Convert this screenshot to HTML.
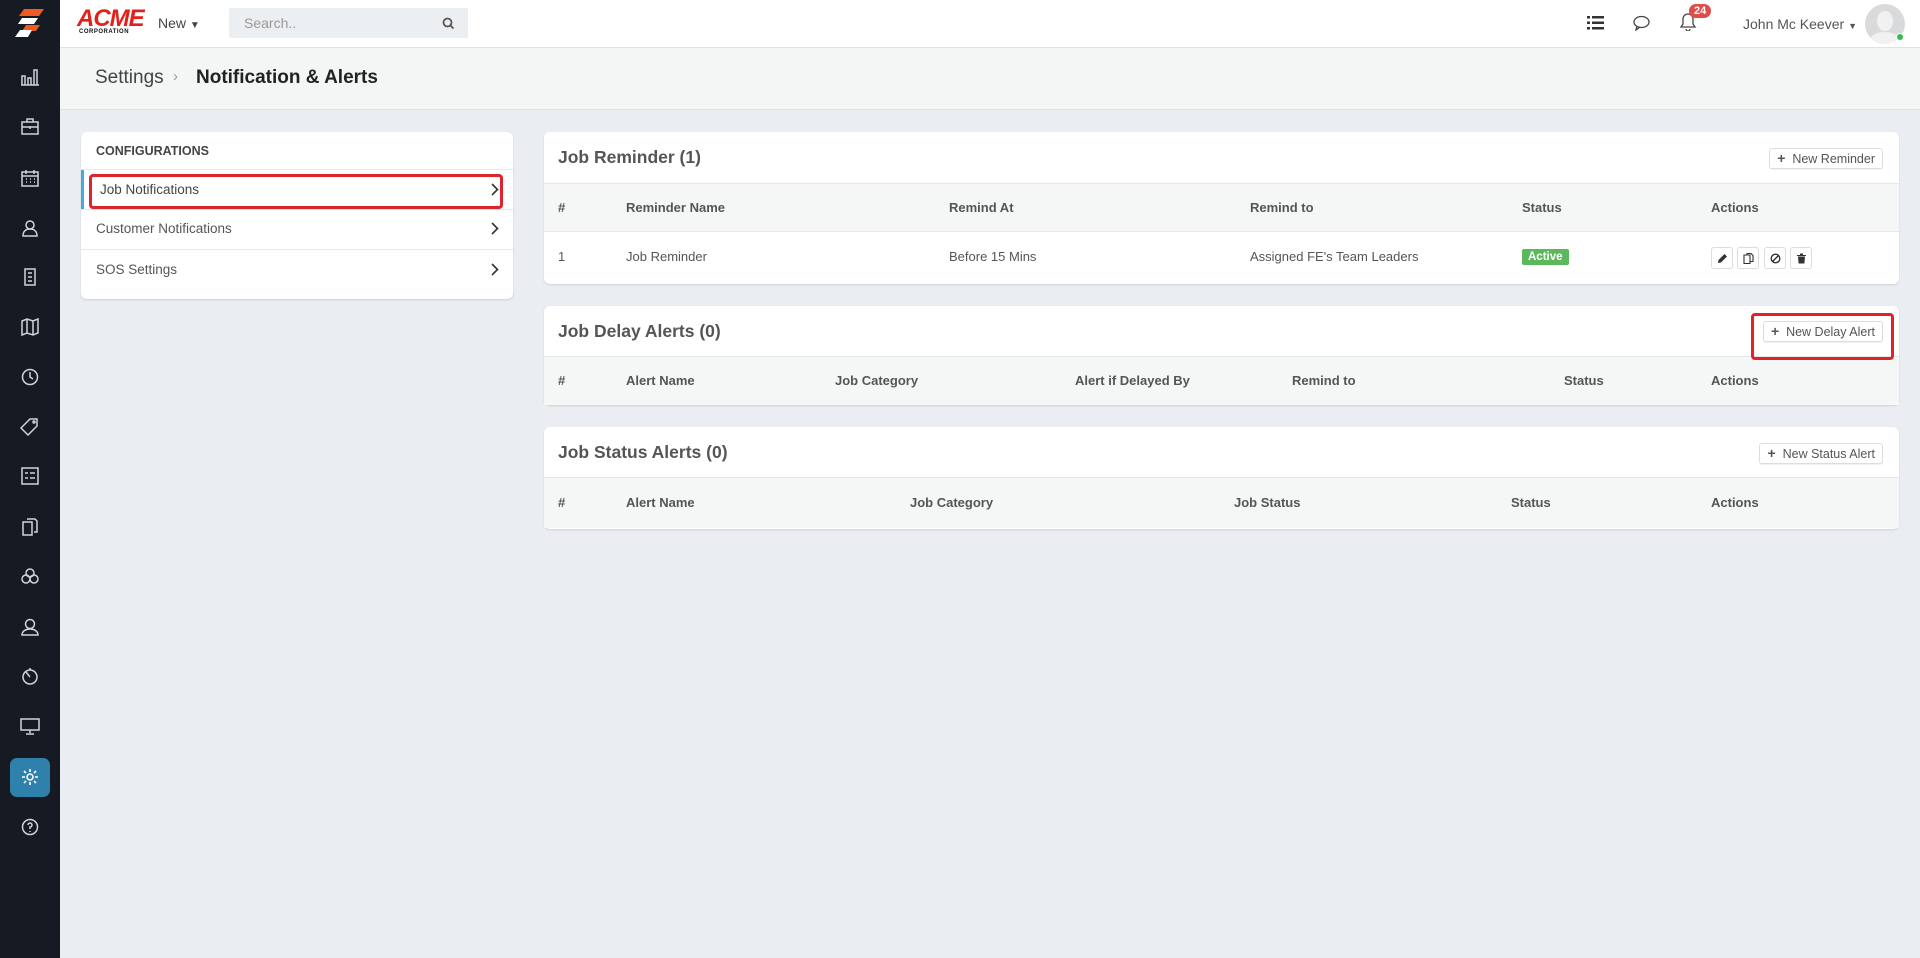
<!DOCTYPE html>
<html><head><style>
*{box-sizing:border-box;margin:0;padding:0}
body{width:1920px;height:958px;overflow:hidden;background:#eaedf1;font-family:"Liberation Sans",sans-serif;color:#555;position:relative}
.side{position:absolute;left:0;top:0;width:60px;height:958px;background:#161a23}
.side svg{position:absolute;left:20px}
.top{position:absolute;left:60px;top:0;right:0;height:48px;background:#fff;border-bottom:1px solid #e0e3e6}
.crumb{position:absolute;left:60px;top:48px;right:0;height:62px;background:#f4f5f5;border-bottom:1px solid #dfe2e5}
.card{position:absolute;background:#fff;border-radius:6px;box-shadow:0 1px 2px rgba(0,0,0,.12)}
.abs{position:absolute}
.th{position:absolute;font-size:13px;font-weight:bold;color:#555}
.td{position:absolute;font-size:13px;color:#555}
.hd{position:absolute;left:14px;font-size:17.5px;font-weight:bold;color:#555}
.btn{position:absolute;border:1px solid #ddd;border-radius:3px;font-size:12.5px;color:#555;height:21px;line-height:19px;padding:0 7px;background:#fff;box-shadow:0 1px 1px rgba(0,0,0,.06)}
.thead{position:absolute;left:0;right:0;background:#f5f6f6;border-top:1px solid #e5e7e9;border-bottom:1px solid #e5e7e9}
.ib{position:absolute;top:247px;width:22px;height:22px;border:1px solid #ddd;border-radius:3px;background:#fff}
.ib svg{position:absolute;left:5px;top:5px}
.red{position:absolute;border:3px solid #e0232a;border-radius:4px}
.chev{position:absolute;right:14px}
</style></head><body>
<div class="side">
<svg style="left:14px;top:8px" width="32" height="30" viewBox="0 0 32 30"><path d="M10 1h20l-5 7H5z" fill="#f05a22"/><path d="M8 10h16l-4 6H4z" fill="#fff"/><path d="M12 17h14l-4 6H8z" fill="#f05a22"/><path d="M6 22h12l-4 7H1z" fill="#fff"/></svg>
<svg style="top:68px" width="20" height="18" viewBox="0 0 20 18" fill="none" stroke="#cfd3da" stroke-width="1.5"><path d="M2 17V8h3v9M8 17V10h3v7M14 17V2h3v15M1 17h18"/></svg>
<svg style="top:118px" width="20" height="18" viewBox="0 0 20 18" fill="none" stroke="#cfd3da" stroke-width="1.5"><rect x="2" y="4" width="16" height="12"/><path d="M7 4V1h6v3M2 9h16M10 8v3"/></svg>
<svg style="top:169px" width="20" height="18" viewBox="0 0 20 18" fill="none" stroke="#cfd3da" stroke-width="1.5"><rect x="2" y="3" width="16" height="14"/><path d="M2 7h16M6 1v4M14 1v4M6 10h1M10 10h1M14 10h1M6 13h1M10 13h1M14 13h1"/></svg>
<svg style="top:219px" width="20" height="18" viewBox="0 0 20 18" fill="none" stroke="#cfd3da" stroke-width="1.5"><circle cx="10" cy="6" r="4"/><path d="M3 17c0-5 3-7 7-7s7 2 7 7z"/></svg>
<svg style="top:268px" width="20" height="18" viewBox="0 0 20 18" fill="none" stroke="#cfd3da" stroke-width="1.5"><rect x="5" y="1" width="10" height="16"/><path d="M8 5h4M8 9h4M8 13h4"/></svg>
<svg style="top:318px" width="20" height="18" viewBox="0 0 20 18" fill="none" stroke="#cfd3da" stroke-width="1.5"><path d="M2 3l5-2 6 2 5-2v14l-5 2-6-2-5 2zM7 1v14M13 3v14"/></svg>
<svg style="top:368px" width="20" height="18" viewBox="0 0 20 18" fill="none" stroke="#cfd3da" stroke-width="1.5"><circle cx="10" cy="9" r="7.5"/><path d="M10 4v5l3 2"/></svg>
<svg style="top:418px" width="20" height="18" viewBox="0 0 20 18" fill="none" stroke="#cfd3da" stroke-width="1.5"><path d="M10 1h7v7l-9 9-7-7z"/><circle cx="14" cy="4" r="1"/></svg>
<svg style="top:467px" width="20" height="18" viewBox="0 0 20 18" fill="none" stroke="#cfd3da" stroke-width="1.5"><rect x="2" y="1" width="16" height="16"/><path d="M5 6h3M10 6h5M5 11h3M10 11h5"/></svg>
<svg style="top:518px" width="20" height="18" viewBox="0 0 20 18" fill="none" stroke="#cfd3da" stroke-width="1.5"><path d="M3 4h9v13H3zM7 1h8l2 2v11h-3"/></svg>
<svg style="top:568px" width="20" height="18" viewBox="0 0 20 18" fill="none" stroke="#cfd3da" stroke-width="1.5"><circle cx="6" cy="11" r="4"/><circle cx="14" cy="11" r="4"/><circle cx="10" cy="5" r="4"/></svg>
<svg style="top:618px" width="20" height="18" viewBox="0 0 20 18" fill="none" stroke="#cfd3da" stroke-width="1.5"><circle cx="10" cy="6" r="4.5"/><path d="M2 17c0-4 4-6 8-6s8 2 8 6z"/></svg>
<svg style="top:667px" width="20" height="18" viewBox="0 0 20 18" fill="none" stroke="#cfd3da" stroke-width="1.5"><circle cx="10" cy="10" r="7"/><path d="M10 3V1M6 5l4 5"/></svg>
<svg style="top:717px" width="20" height="18" viewBox="0 0 20 18" fill="none" stroke="#cfd3da" stroke-width="1.5"><rect x="1" y="2" width="18" height="11"/><path d="M10 13v3M6 17h8"/></svg>
<div class="abs" style="left:10px;top:758px;width:40px;height:39px;background:#2f80aa;border-radius:7px"></div>
<svg style="top:768px" width="20" height="18" viewBox="0 0 20 18" fill="none" stroke="#fff" stroke-width="1.6"><circle cx="10" cy="9" r="3"/><path d="M10 1v3M10 14v3M2 9h3M15 9h3M4 3l2 2M14 13l2 2M4 15l2-2M14 5l2-2"/></svg>
<svg style="top:818px" width="20" height="18" viewBox="0 0 20 18" fill="none" stroke="#cfd3da" stroke-width="1.5"><circle cx="10" cy="9" r="7.5"/><path d="M8 7a2 2 0 1 1 2 2v2M10 13v1"/></svg>
</div>
<div class="top">
<div class="abs" style="left:17px;top:9px;font:900 italic 24px 'Liberation Sans';color:#e3211c;letter-spacing:-1px;line-height:20px">ACME</div>
<div class="abs" style="left:19px;top:29px;font:bold 6px 'Liberation Sans';color:#111;letter-spacing:.5px">CORPORATION</div>
<div class="abs" style="left:98px;top:15px;font-size:14px;color:#444">New <span style="font-size:10px">▼</span></div>
<div class="abs" style="left:169px;top:8px;width:239px;height:30px;background:#eceff1;border-radius:2px"><span class="abs" style="left:15px;top:7px;font-size:14px;color:#999">Search..</span>
<svg class="abs" style="left:213px;top:9px" width="13" height="13" viewBox="0 0 13 13" fill="none" stroke="#555" stroke-width="1.8"><circle cx="5.5" cy="5.5" r="4"/><path d="M8.5 8.5l3 3"/></svg></div>
<svg class="abs" style="left:1527px;top:16px" width="17" height="14" viewBox="0 0 17 14" fill="#333"><rect x="0" y="0" width="3" height="2.5"/><rect x="5" y="0" width="12" height="2.5"/><rect x="0" y="5.5" width="3" height="2.5"/><rect x="5" y="5.5" width="12" height="2.5"/><rect x="0" y="11" width="3" height="2.5"/><rect x="5" y="11" width="12" height="2.5"/></svg>
<svg class="abs" style="left:1573px;top:15px" width="17" height="16" viewBox="0 0 17 16" fill="none" stroke="#444" stroke-width="1.3"><ellipse cx="8.5" cy="7" rx="7.5" ry="5.5"/><path d="M4 11l-1 4 4-3"/></svg>
<svg class="abs" style="left:1620px;top:12px" width="16" height="19" viewBox="0 0 16 19" fill="none" stroke="#444" stroke-width="1.3"><path d="M8 2a5 5 0 0 1 5 5v5l2 3H1l2-3V7a5 5 0 0 1 5-5zM6 17a2 2 0 0 0 4 0"/></svg>
<div class="abs" style="left:1629px;top:4px;background:#e04b4b;color:#fff;font:bold 11px 'Liberation Sans';border-radius:8px;padding:1px 5px">24</div>
<div class="abs" style="left:1683px;top:16px;font-size:14px;color:#555">John Mc Keever <span style="font-size:9px">▼</span></div>
<div class="abs" style="left:1805px;top:4px;width:40px;height:40px;border-radius:50%;background:#d9dadc;overflow:hidden"><div class="abs" style="left:12px;top:7px;width:16px;height:20px;border-radius:50%;background:#f1f1f1"></div><div class="abs" style="left:4px;top:28px;width:32px;height:20px;border-radius:50%;background:#f1f1f1"></div></div>
<div class="abs" style="left:1836px;top:33px;width:8px;height:8px;border-radius:50%;background:#2ebd4e;border:1px solid #fff"></div>
</div>
<div class="crumb"><span class="abs" style="left:35px;top:19px;font-size:19px;color:#444">Settings</span><span class="abs" style="left:113px;top:20px;font-size:15px;color:#999">›</span><span class="abs" style="left:136px;top:19px;font-size:19px;font-weight:bold;color:#222">Notification &amp; Alerts</span></div>

<div class="card" style="left:81px;top:132px;width:432px;height:167px">
<div class="abs" style="left:15px;top:12px;font-size:12.5px;font-weight:bold;color:#444">CONFIGURATIONS</div>
<div class="abs" style="left:0;right:0;top:37px;border-top:1px solid #e5e7e9"></div>
<div class="abs" style="left:0;top:38px;width:3px;height:39px;background:#4aa7d9"></div>
<div class="abs" style="left:19px;top:50px;font-size:13.5px;color:#444">Job Notifications</div>
<svg class="chev" style="top:51px" width="8" height="13" viewBox="0 0 8 13" fill="none" stroke="#333" stroke-width="1.6"><path d="M1 1l5.5 5.5L1 12"/></svg>
<div class="abs" style="left:0;right:0;top:77px;border-top:1px solid #e5e7e9"></div>
<div class="abs" style="left:15px;top:89px;font-size:13.5px;color:#555">Customer Notifications</div>
<svg class="chev" style="top:90px" width="8" height="13" viewBox="0 0 8 13" fill="none" stroke="#333" stroke-width="1.6"><path d="M1 1l5.5 5.5L1 12"/></svg>
<div class="abs" style="left:0;right:0;top:117px;border-top:1px solid #e5e7e9"></div>
<div class="abs" style="left:15px;top:130px;font-size:13.5px;color:#555">SOS Settings</div>
<svg class="chev" style="top:131px" width="8" height="13" viewBox="0 0 8 13" fill="none" stroke="#333" stroke-width="1.6"><path d="M1 1l5.5 5.5L1 12"/></svg>
</div>
<div class="red" style="left:89px;top:174px;width:414px;height:35px"></div>

<div class="card" style="left:544px;top:132px;width:1355px;height:152px">
<div class="hd" style="top:15px">Job Reminder (1)</div>
<div class="btn" style="right:16px;top:16px"><b style="font-size:14px">+</b>&nbsp; New Reminder</div>
<div class="thead" style="top:51px;height:49px"></div>
<div class="th" style="left:14px;top:68px">#</div><div class="th" style="left:82px;top:68px">Reminder Name</div><div class="th" style="left:405px;top:68px">Remind At</div><div class="th" style="left:706px;top:68px">Remind to</div><div class="th" style="left:978px;top:68px">Status</div><div class="th" style="left:1167px;top:68px">Actions</div>
<div class="td" style="left:14px;top:117px">1</div><div class="td" style="left:82px;top:117px">Job Reminder</div><div class="td" style="left:405px;top:117px">Before 15 Mins</div><div class="td" style="left:706px;top:117px">Assigned FE's Team Leaders</div>
<div class="abs" style="left:978px;top:117px;background:#5cb85c;color:#fff;font:bold 11.5px 'Liberation Sans';padding:2px 6px;border-radius:2px">Active</div>
</div>
<div class="ib" style="left:1711px"><svg width="11" height="11" viewBox="0 0 11 11" fill="#333"><path d="M1 10l.5-3 6-6 2.5 2.5-6 6z"/></svg></div>
<div class="ib" style="left:1737px"><svg width="11" height="11" viewBox="0 0 11 11" fill="none" stroke="#333" stroke-width="1.1"><path d="M1 2h6v8.5H1zM4 2V.5h4l2 2v6H7"/></svg></div>
<div class="ib" style="left:1764px"><svg width="11" height="11" viewBox="0 0 11 11" fill="none" stroke="#333" stroke-width="1.4"><circle cx="5.5" cy="5.5" r="4.3"/><path d="M2.5 8.5l6-6"/></svg></div>
<div class="ib" style="left:1790px"><svg width="11" height="11" viewBox="0 0 11 11" fill="#333"><path d="M1 2h9v1H1zM4 .5h3V2H4zM2 3.5h7l-.6 7H2.6z"/></svg></div>

<div class="card" style="left:544px;top:306px;width:1355px;height:99px">
<div class="hd" style="top:15px">Job Delay Alerts (0)</div>
<div class="btn" style="right:16px;top:15px"><b style="font-size:14px">+</b>&nbsp; New Delay Alert</div>
<div class="thead" style="top:50px;height:49px;border-bottom:none"></div>
<div class="th" style="left:14px;top:67px">#</div><div class="th" style="left:82px;top:67px">Alert Name</div><div class="th" style="left:291px;top:67px">Job Category</div><div class="th" style="left:531px;top:67px">Alert if Delayed By</div><div class="th" style="left:748px;top:67px">Remind to</div><div class="th" style="left:1020px;top:67px">Status</div><div class="th" style="left:1167px;top:67px">Actions</div>
</div>
<div class="red" style="left:1751px;top:313px;width:143px;height:47px"></div>

<div class="card" style="left:544px;top:427px;width:1355px;height:102px">
<div class="hd" style="top:15px">Job Status Alerts (0)</div>
<div class="btn" style="right:16px;top:16px"><b style="font-size:14px">+</b>&nbsp; New Status Alert</div>
<div class="thead" style="top:50px;height:51px;border-bottom:none"></div>
<div class="th" style="left:14px;top:68px">#</div><div class="th" style="left:82px;top:68px">Alert Name</div><div class="th" style="left:366px;top:68px">Job Category</div><div class="th" style="left:690px;top:68px">Job Status</div><div class="th" style="left:967px;top:68px">Status</div><div class="th" style="left:1167px;top:68px">Actions</div>
</div>
</body></html>
